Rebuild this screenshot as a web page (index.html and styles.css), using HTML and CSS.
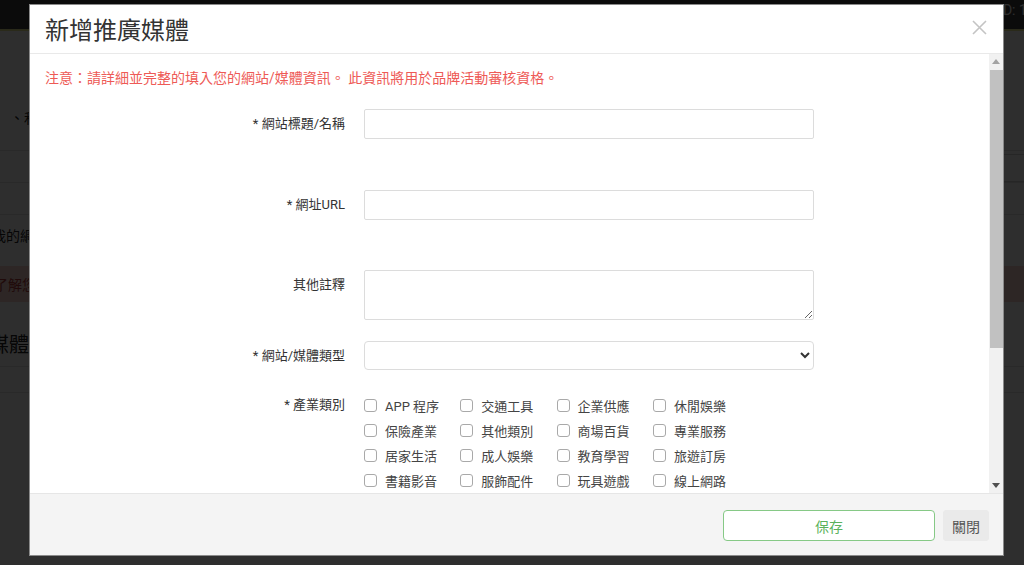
FILE: index.html
```html
<!DOCTYPE html>
<html lang="zh-Hant">
<head>
<meta charset="utf-8">
<title>新增推廣媒體</title>
<link rel="stylesheet" href="styles.css">
</head>
<body>
<div class="page">
  <div class="topbar"><span class="uid">UID: 1088</span></div>
  <div class="sec sec-intro"><p class="intro-text">、和其他推廣者一同合作</p></div>
  <div class="sec sec-tools"><span class="tool-box"></span></div>
  <div class="sec sec-blank"></div>
  <div class="sec sec-mine"><p class="mine-text">我的網站與媒體</p></div>
  <div class="alert-band"><p class="alert-text">了解您的推廣媒體</p></div>
  <h2 class="page-heading">媒體列表</h2>
  <div class="sec sec-line"></div>
</div>
<div class="overlay"></div>

<div class="modal">
  <div class="modal-header">
    <h1 class="modal-title">新增推廣媒體</h1>
    <span class="close-x"><svg width="15" height="15" viewBox="0 0 15 15"><path d="M1 1L14 14M14 1L1 14" stroke="#c4c4c4" stroke-width="1.6" fill="none"/></svg></span>
  </div>
  <div class="modal-body">
    <div class="body-content">
      <p class="notice">注意：請詳細並完整的填入您的網站/媒體資訊。 此資訊將用於品牌活動審核資格。</p>
      <div class="form-row gap-lg">
        <label class="form-label">* 網站標題/名稱</label>
        <input class="form-input" type="text">
      </div>
      <div class="form-row gap-lg2">
        <label class="form-label">* 網址URL</label>
        <input class="form-input" type="text">
      </div>
      <div class="form-row">
        <label class="form-label">其他註釋</label>
        <textarea class="form-input form-textarea"></textarea>
      </div>
      <div class="form-row gap-sel">
        <label class="form-label">* 網站/媒體類型</label>
        <select class="form-input form-select"><option></option></select>
      </div>
      <div class="form-row">
        <label class="form-label label-check">* 產業類別</label>
        <div class="check-grid">
          <label class="check"><input type="checkbox"><span>APP 程序</span></label>
          <label class="check"><input type="checkbox"><span>交通工具</span></label>
          <label class="check"><input type="checkbox"><span>企業供應</span></label>
          <label class="check"><input type="checkbox"><span>休閒娛樂</span></label>
          <label class="check"><input type="checkbox"><span>保險產業</span></label>
          <label class="check"><input type="checkbox"><span>其他類別</span></label>
          <label class="check"><input type="checkbox"><span>商場百貨</span></label>
          <label class="check"><input type="checkbox"><span>專業服務</span></label>
          <label class="check"><input type="checkbox"><span>居家生活</span></label>
          <label class="check"><input type="checkbox"><span>成人娛樂</span></label>
          <label class="check"><input type="checkbox"><span>教育學習</span></label>
          <label class="check"><input type="checkbox"><span>旅遊訂房</span></label>
          <label class="check"><input type="checkbox"><span>書籍影音</span></label>
          <label class="check"><input type="checkbox"><span>服飾配件</span></label>
          <label class="check"><input type="checkbox"><span>玩具遊戲</span></label>
          <label class="check"><input type="checkbox"><span>線上網路</span></label>
        </div>
      </div>
    </div>
    <div class="scrollbar">
      <span class="sb-btn"><svg width="8" height="5" viewBox="0 0 8 5"><path d="M0 5L4 0L8 5Z" fill="#a3a3a3"/></svg></span>
      <div class="sb-track"><div class="sb-thumb"></div></div>
      <span class="sb-btn"><svg width="8" height="5" viewBox="0 0 8 5"><path d="M0 0L4 5L8 0Z" fill="#505050"/></svg></span>
    </div>
  </div>
  <div class="modal-footer">
    <button class="btn btn-save" type="button">保存</button>
    <button class="btn btn-close" type="button">關閉</button>
  </div>
</div>
</body>
</html>
```
FILE: styles.css
```css
html, body {
  margin: 0;
  padding: 0;
  height: 100%;
  overflow: hidden;
}
body {
  font-family: "Roboto", "Noto Sans CJK TC", "Noto Sans", sans-serif;
  background: #ffffff;
  color: #333;
}

/* background page */
.page {
  width: 1024px;
  height: 565px;
  background: #ffffff;
  overflow: hidden;
}
.topbar {
  height: 29px;
  background: #3c3c3c;
  border-bottom: 2px solid #e8e890;
  display: flex;
  align-items: flex-start;
  padding-left: 990px;
  overflow: hidden;
  white-space: nowrap;
}
.uid {
  color: #ffffff;
  font-size: 14px;
  line-height: 20px;
}
.sec { border-bottom: 1px solid #e0e0e0; }
.intro-text {
  margin: 0;
  padding: 76px 0 0 10px;
  height: 43px;
  font-size: 14px;
  color: #222;
}
.sec-intro { height: 119px; }
.sec-tools {
  height: 31px;
  display: flex;
  justify-content: flex-end;
  align-items: flex-end;
}
.tool-box {
  width: 40px;
  height: 26px;
  border: 1px solid #cfcfcf;
  border-right: 0;
  margin-right: -20px;
}
.sec-blank { height: 31px; }
.sec-mine { height: 51px; border-bottom: 0; overflow: hidden; }
.mine-text {
  margin: 0;
  padding-top: 10px;
  margin-left: -8px;
  font-size: 14px;
  color: #222;
}
.alert-band {
  height: 36px;
  background: #f6d2cc;
  display: flex;
  align-items: center;
}
.alert-text {
  margin: 0 0 0 -6px;
  font-size: 14px;
  color: #b03a3a;
}
.page-heading {
  margin: 0;
  height: 64px;
  line-height: 86px;
  font-size: 20px;
  font-weight: normal;
  margin-left: -11px;
  color: #222;
  border-bottom: 1px solid #e0e0e0;
}
.sec-line { height: 25px; }

.overlay {
  position: absolute;
  left: 0;
  top: 0;
  width: 1024px;
  height: 565px;
  background: rgba(0, 0, 0, 0.82);
}

/* modal */
.modal {
  position: absolute;
  left: 29px;
  top: 4px;
  width: 975px;
  height: 552px;
  box-sizing: border-box;
  background: #fff;
  border: 1px solid #8a8a8a;
  display: flex;
  flex-direction: column;
}
.modal-header {
  height: 48px;
  flex: none;
  border-bottom: 1px solid #e9e9e9;
  display: flex;
  align-items: center;
  justify-content: space-between;
  padding: 0 16px 0 15px;
}
.modal-title {
  margin: 0;
  font-size: 24px;
  font-weight: normal;
  color: #333;
  line-height: 48px;
  font-family: "Noto Sans CJK TC", "Noto Sans", sans-serif;
}
.close-x {
  display: flex;
  width: 15px;
  height: 15px;
  margin-top: -4px;
}
.modal-body {
  flex: 1;
  min-height: 0;
  display: flex;
}
.body-content {
  flex: 1;
  min-width: 0;
  overflow: hidden;
  padding: 14px 15px 0 15px;
}
.scrollbar {
  width: 14px;
  flex: none;
  background: #f1f1f1;
  display: flex;
  flex-direction: column;
}
.sb-btn {
  height: 15px;
  flex: none;
  display: flex;
  align-items: center;
  justify-content: center;
}
.sb-track { flex: 1; }
.sb-thumb {
  height: 278px;
  margin: 1px 0 0 1px;
  background: #c1c1c1;
}

.notice {
  margin: 0 0 21px 0;
  font-size: 14px;
  line-height: 20px;
  color: #ee5a56;
}
.form-row {
  display: flex;
  align-items: flex-start;
  gap: 19px;
  margin-bottom: 21px;
}
.form-row.gap-lg { margin-bottom: 51px; }
.form-row.gap-lg2 { margin-bottom: 50px; }
.form-row.gap-sel { margin-bottom: 23px; }
.form-label {
  width: 300px;
  flex: none;
  text-align: right;
  font-size: 13px;
  line-height: 16px;
  padding-top: 7px;
  color: #333;
}
.form-label.label-check { padding-top: 4px; }
.form-input {
  width: 450px;
  height: 30px;
  box-sizing: border-box;
  border: 1px solid #dcdcdc;
  border-radius: 2px;
  background: #fff;
  margin: 0;
  font-family: inherit;
  font-size: 13px;
  padding: 4px 8px;
}
.form-textarea {
  height: 50px;
  display: block;
  resize: vertical;
}
.form-select {
  height: 29px;
  border-radius: 4px;
  color: #333;
}
.check-grid {
  display: grid;
  grid-template-columns: repeat(4, 96.3px);
  grid-auto-rows: 25px;
}
.check {
  display: flex;
  align-items: center;
  gap: 8px;
  font-size: 13px;
  color: #444;
  height: 25px;
}
.check input {
  -webkit-appearance: none;
  appearance: none;
  margin: 0;
  width: 13px;
  height: 13px;
  flex: none;
  box-sizing: border-box;
  border: 1px solid #a9a9a9;
  border-radius: 3px;
  background: #fff;
}

.modal-footer {
  height: 62px;
  flex: none;
  box-sizing: border-box;
  border-top: 1px solid #e6e6e6;
  background: #f4f4f4;
  display: flex;
  justify-content: flex-end;
  align-items: flex-start;
  gap: 8px;
  padding: 16px 14px 0 0;
}
.btn {
  height: 31px;
  box-sizing: border-box;
  font-family: "Noto Sans CJK TC", "Noto Sans", sans-serif;
  font-size: 14px;
  cursor: pointer;
  margin: 0;
}
.btn-save {
  width: 212px;
  background: #fff;
  border: 1px solid #86c986;
  border-radius: 4px;
  color: #5cb25c;
}
.btn-close {
  width: 46px;
  background: #eaeaea;
  border: 1px solid #eaeaea;
  border-radius: 3px;
  color: #555;
  padding: 0;
}
```
